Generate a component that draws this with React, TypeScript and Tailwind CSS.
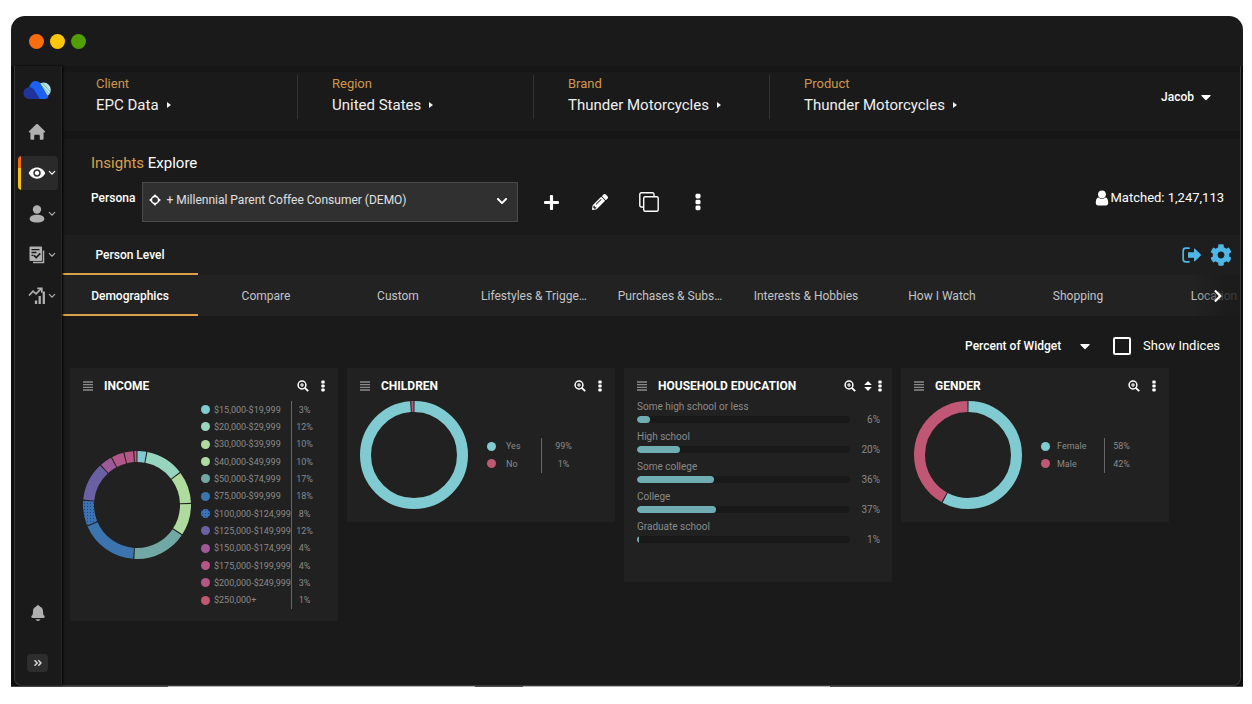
import type { ReactNode } from "react";
import { FaAngleDoubleRight, FaCaretDown, FaChevronDown, FaChevronRight, FaCog, FaPencilAlt, FaPlus } from "react-icons/fa";
import { IoNotifications } from "react-icons/io5";
import { MdVisibility } from "react-icons/md";

type Slice = { label: string; value: number; color: string };

const filters = [
  { label: "Client", value: "EPC Data" },
  { label: "Region", value: "United States" },
  { label: "Brand", value: "Thunder Motorcycles" },
  { label: "Product", value: "Thunder Motorcycles" },
];

const tabs = [
  { name: "Demographics", width: "w-[136px]" },
  { name: "Compare", width: "w-[136px]" },
  { name: "Custom", width: "w-[128px]" },
  { name: "Lifestyles & Trigge…", width: "w-[144px]" },
  { name: "Purchases & Subs…", width: "w-[128px]" },
  { name: "Interests & Hobbies", width: "w-[144px]" },
  { name: "How I Watch", width: "w-[128px]" },
  { name: "Shopping", width: "w-[144px]" },
  { name: "Location", width: "w-[128px]" },
];

const income: Slice[] = [
  { label: "$15,000-$19,999", value: 3, color: "#80cbd1" },
  { label: "$20,000-$29,999", value: 12, color: "#98d5bf" },
  { label: "$30,000-$39,999", value: 10, color: "#afdb9e" },
  { label: "$40,000-$49,999", value: 10, color: "#afdb9e" },
  { label: "$50,000-$74,999", value: 17, color: "#72a8a4" },
  { label: "$75,000-$99,999", value: 18, color: "#3b74ae" },
  { label: "$100,000-$124,999", value: 8, color: "url(#stipple)" },
  { label: "$125,000-$149,999", value: 12, color: "#6a61a5" },
  { label: "$150,000-$174,999", value: 4, color: "#9d5a99" },
  { label: "$175,000-$199,999", value: 4, color: "#b45687" },
  { label: "$200,000-$249,999", value: 3, color: "#b45686" },
  { label: "$250,000+", value: 1, color: "#c05775" },
];

const children: Slice[] = [
  { label: "Yes", value: 99, color: "#80cbd1" },
  { label: "No", value: 1, color: "#c05775" },
];

const gender: Slice[] = [
  { label: "Female", value: 58, color: "#80cbd1" },
  { label: "Male", value: 42, color: "#c05775" },
];

const education = [
  { label: "Some high school or less", value: 6 },
  { label: "High school", value: 20 },
  { label: "Some college", value: 36 },
  { label: "College", value: 37 },
  { label: "Graduate school", value: 1 },
];

/* Icons */

function Kebab({ className }: { className: string }) {
  return (
    <svg viewBox="0 0 6 18" fill="currentColor" className={className} aria-hidden="true">
      <rect x="0.5" y="0.8" width="5" height="4.6" rx="1.4" />
      <rect x="0.5" y="6.7" width="5" height="4.6" rx="1.4" />
      <rect x="0.5" y="12.6" width="5" height="4.6" rx="1.4" />
    </svg>
  );
}

function CloudLogo() {
  return (
    <svg viewBox="0 0 28 20" className="mr-0.5 h-5 w-7" aria-hidden="true">
      <circle cx="20.6" cy="9.8" r="7.2" fill="#b9e3e6" />
      <path d="M17 4l9 10M19.500 3l8 9M15 6l10 11" stroke="#5fb3b8" strokeWidth="0.8" />
      <path d="M6 8.200C7 3.500 9.500.8 13 1c3 .2 4.500 2 5.400 4.300L25.500 17c-.8 1.300-1.900 1.900-3.300 1.900H14z" fill="#1c62f2" />
      <path d="M6.500 19C3 19 .5 16.500.5 13.200c0-3.500 2.500-5.900 5.800-5.900 2.300 0 3.900.9 5 2.700l5.600 9z" fill="#22329b" />
    </svg>
  );
}

function HomeIcon() {
  return (
    <svg viewBox="0 0 18 18" fill="currentColor" className="size-[18px]" aria-hidden="true">
      <path d="M8.200 1.300c.5-.4 1.100-.4 1.600 0l7.200 6.900c.5.500.2 1.200-.5 1.200h-.9v6c0 .9-.5 1.400-1.300 1.400h-2.500v-3.900c0-.8-.4-1.200-1.200-1.200H7.400c-.8 0-1.200.4-1.200 1.200v3.900H3.700c-.8 0-1.300-.5-1.300-1.400v-6h-.9c-.7 0-1-.7-.5-1.200z" />
    </svg>
  );
}

function PersonIcon() {
  return (
    <svg viewBox="0 0 16 18" fill="currentColor" className="h-[18px] w-4" aria-hidden="true">
      <circle cx="8" cy="4.500" r="4.200" />
      <path d="M.7 13.800C.7 11.300 3.500 9.700 8 9.700s7.300 1.600 7.300 4.100S12.500 17.500 8 17.500.7 16.300.7 13.800z" />
    </svg>
  );
}

function UserIcon() {
  return (
    <svg viewBox="0 0 14 16" fill="currentColor" className="h-4 w-3.5" aria-hidden="true">
      <circle cx="7" cy="4.300" r="3.900" />
      <path d="M3.500 7.400C1.500 7.700.8 10 .8 12.700c0 1.700.9 2.700 2.300 2.700h7.800c1.400 0 2.300-1 2.300-2.700 0-2.700-.7-5-2.700-5.300-1 .9-2.100 1.400-3.500 1.400s-2.500-.5-3.500-1.400z" />
    </svg>
  );
}

function SurveyIcon() {
  return (
    <svg viewBox="0 0 16 18" className="h-[18px] w-4" aria-hidden="true">
      <path d="M14.500 4.500v12H4" fill="none" stroke="currentColor" strokeWidth="1.500" />
      <rect x="0.5" y="0.5" width="12.500" height="14.500" rx="1" fill="currentColor" />
      <path d="M2.500 3.700h8M2.500 6.500h5M2.500 9.300h2" stroke="#1a1a1a" strokeWidth="1.300" />
      <path d="M5 9.300l2.300 2.300 4-4.300" fill="none" stroke="#1a1a1a" strokeWidth="1.700" />
    </svg>
  );
}

function TrendIcon() {
  return (
    <svg viewBox="0 0 18 18" className="size-[18px]" fill="none" stroke="currentColor" aria-hidden="true">
      <path d="M1 8.500L5 4.200l3 2.600 5-5" strokeWidth="1.700" />
      <path d="M9.300 1.300h4.500v4.500" strokeWidth="1.700" />
      <path d="M8 17v-3.500M11.700 17V9M15.800 17V4.500" strokeWidth="2.300" />
    </svg>
  );
}

function MiniChevron() {
  return (
    <svg viewBox="0 0 8 6" className="h-1.5 w-2" fill="none" stroke="currentColor" strokeWidth="1.200" aria-hidden="true">
      <path d="M1 1.200l3 3 3-3" />
    </svg>
  );
}

function CopyIcon() {
  return (
    <svg viewBox="0 0 20 20" className="size-5" fill="none" stroke="currentColor" strokeWidth="1.400" aria-hidden="true">
      <rect x="4.700" y="4.700" width="14.500" height="14.500" rx="1.500" />
      <path d="M4.500 15H2.300A1.500 1.500 0 0 1 .8 13.500V2.300A1.500 1.500 0 0 1 2.300.8h11.200A1.500 1.500 0 0 1 15 2.300v2.200" />
    </svg>
  );
}

function TargetIcon() {
  return (
    <svg viewBox="0 0 12 12" className="size-3" fill="none" stroke="currentColor" aria-hidden="true">
      <circle cx="6" cy="6" r="3.700" strokeWidth="1.400" />
      <path d="M6 0l2.400 3.400H3.600zM6 12l2.400-3.400H3.600zM0 6l3.400-2.400v4.800zM12 6L8.600 3.600v4.800z" fill="currentColor" stroke="none" />
      <circle cx="6" cy="6" r="2.500" fill="#303030" stroke="none" />
    </svg>
  );
}

function ExportIcon() {
  return (
    <svg viewBox="0 0 20 16" className="h-4 w-5" aria-hidden="true">
      <path d="M7 1.200H3.700C2.200 1.200 1.200 2.200 1.200 3.700v8.600c0 1.500 1 2.500 2.500 2.500H7" fill="none" stroke="currentColor" strokeWidth="1.700" strokeLinecap="round" />
      <path d="M6 5.200h6V2.300c0-.7.700-.9 1.200-.4l5.400 5.400c.4.400.4 1 0 1.400l-5.400 5.400c-.5.500-1.200.3-1.200-.4v-2.900H6z" fill="currentColor" />
    </svg>
  );
}

function ZoomIcon() {
  return (
    <svg viewBox="0 0 12 12" className="size-3" fill="none" stroke="currentColor" aria-hidden="true">
      <circle cx="5" cy="5" r="3.900" strokeWidth="1.500" />
      <path d="M5 3v4M3 5h4" strokeWidth="1.100" />
      <path d="M7.800 7.800l3.400 3.400" strokeWidth="1.900" />
    </svg>
  );
}

function SortIcon() {
  return (
    <svg viewBox="0 0 8 10" className="h-2.5 w-2" fill="currentColor" aria-hidden="true">
      <path d="M4 0l3.800 4H.2zM4 10L.2 6h7.600z" />
    </svg>
  );
}

function DragIcon() {
  return (
    <svg viewBox="0 0 10 10" className="size-2.5 text-[#8a8a8a]" stroke="currentColor" strokeWidth="1.300" aria-hidden="true">
      <path d="M0 1h10M0 3.700h10M0 6.300h10M0 9h10" />
    </svg>
  );
}

/* Charts */

function Donut({ data }: { data: Slice[] }) {
  const total = data.reduce((sum, d) => sum + d.value, 0);
  let start = 0;
  return (
    <svg viewBox="0 0 108 108" className="size-[108px] shrink-0" role="img" aria-label="Share by group">
      <defs>
        <pattern id="stipple" width="3" height="3" patternUnits="userSpaceOnUse">
          <rect width="3" height="3" fill="#3b74ae" />
          <rect x="1" y="1" width="1" height="1" fill="#1c3fae" />
        </pattern>
      </defs>
      <g transform="rotate(-90 54 54)" fill="none" strokeWidth="11">
        {data.map((d) => {
          const size = (d.value / total) * 100;
          const offset = start;
          start += size;
          return (
            <circle
              key={d.label}
              cx="54"
              cy="54"
              r="48.500"
              pathLength={100}
              stroke={d.color}
              strokeDasharray={`${size - 0.35} 100`}
              strokeDashoffset={-offset - 0.17}
            />
          );
        })}
      </g>
    </svg>
  );
}

function Legend({ data, className, labelClass, valueClass }: { data: Slice[]; className: string; labelClass: string; valueClass: string }) {
  return (
    <div className={`flex text-[9px] leading-3 text-[#8a8a8a] ${className}`}>
      <ul className={`grid items-center ${labelClass}`}>
        {data.map((d) => (
          <li key={d.label} className="flex items-center gap-[inherit] whitespace-nowrap">
            <svg viewBox="0 0 9 9" className="size-[9px] shrink-0" aria-hidden="true">
              <circle cx="4.500" cy="4.500" r="4.500" fill={d.color} />
            </svg>
            {d.label}
          </li>
        ))}
      </ul>
      <ul className={`grid items-center border-l border-[#666] text-center ${valueClass}`}>
        {data.map((d) => (
          <li key={d.label}>{d.value}%</li>
        ))}
      </ul>
    </div>
  );
}

function Widget({ title, sortable, className, children: body }: { title: string; sortable?: boolean; className: string; children: ReactNode }) {
  return (
    <section className={`w-[268px] bg-[#212121] pl-[13px] ${className}`}>
      <header className={`flex h-[33px] items-center pt-[3px] ${sortable ? "pr-2.5" : "pr-[13px]"}`}>
        <DragIcon />
        <h2 className="ml-[11px] flex-1 text-xs font-bold text-white">{title}</h2>
        <button type="button" aria-label="Zoom in" className="text-white">
          <ZoomIcon />
        </button>
        {sortable && (
          <button type="button" aria-label="Sort" className="ml-2 text-white">
            <SortIcon />
          </button>
        )}
        <button type="button" aria-label={`${title} options`} className={sortable ? "ml-1.5 text-white" : "ml-3 text-white"}>
          <Kebab className="h-3 w-1" />
        </button>
      </header>
      {body}
    </section>
  );
}

function NavItem({ label, active, menu, children: icon }: { label: string; active?: boolean; menu?: boolean; children: ReactNode }) {
  return (
    <button
      type="button"
      aria-label={label}
      className={`relative flex h-[34px] w-10 items-center gap-0.5 overflow-hidden rounded pl-2.5 ${active ? "bg-[#2a2a2a] text-white" : "text-[#b0b0b0]"}`}
    >
      {active && <span className="absolute inset-y-0 left-0 w-[3px] bg-linear-to-b from-[#f96a0c] from-35% to-[#ffc107] to-35%" />}
      <span className="flex w-[18px] shrink-0 justify-center">{icon}</span>
      {menu && <MiniChevron />}
    </button>
  );
}

function Sidebar() {
  return (
    <aside className="z-10 flex w-[47px] shrink-0 flex-col items-center border-r border-[#272727] pt-3.5 pr-px pb-[13px] shadow-[1px_0_2px_#000]">
      <CloudLogo />
      <nav className="mt-[15px] flex flex-col gap-[7px]">
        <NavItem label="Home">
          <HomeIcon />
        </NavItem>
        <NavItem label="Insights" active menu>
          <MdVisibility className="size-[18px]" />
        </NavItem>
        <NavItem label="People" menu>
          <PersonIcon />
        </NavItem>
        <NavItem label="Surveys" menu>
          <SurveyIcon />
        </NavItem>
        <NavItem label="Trends" menu>
          <TrendIcon />
        </NavItem>
      </nav>
      <button type="button" aria-label="Notifications" className="mt-auto text-[#b0b0b0]">
        <IoNotifications className="size-[18px]" />
      </button>
      <button type="button" aria-label="Expand menu" className="mt-8 flex h-[18px] w-[21px] items-center justify-center rounded-sm bg-[#2d2d2d] text-[#d0d0d0]">
        <FaAngleDoubleRight className="size-2.5" />
      </button>
    </aside>
  );
}

export default function App() {
  return (
    <div className="flex min-h-screen flex-col bg-white pt-4 pr-[9px] pb-[17px] pl-[11px] font-['Roboto',sans-serif] text-[#e6e6e6]">
      <div className="flex grow flex-col overflow-hidden rounded-t-[14px] bg-[#1a1a1a]">
        {/* Window bar */}
        <div className="flex h-[50px] items-center gap-1.5 pl-[18px]">
          <span className="size-[15px] rounded-full bg-[#fb6d0c]" />
          <span className="size-[15px] rounded-full bg-[#ffc605]" />
          <span className="size-[15px] rounded-full bg-[#529f02]" />
        </div>

        <div className="flex grow bg-[#0e0e0e] pr-0.5 pl-[3px]">
          <div className="flex min-w-0 grow rounded-b-lg border-x border-b border-[#3a3a3a] bg-[#1a1a1a]">
            <Sidebar />

            <main className="min-w-0 flex-1">
              <header className="flex items-center border-t-6 border-b-8 border-[#161616] pt-[3px] pb-3">
                {filters.map((f) => (
                  <div key={f.label} className="h-11 w-[236px] border-r border-[#333] pl-[34px] last-of-type:border-0">
                    <div className="text-[13px] leading-[18px] text-[#cf9848]">{f.label}</div>
                    <button type="button" className="flex items-center gap-2 text-[15px] leading-6 whitespace-nowrap text-[#f0f0f0]">
                      {f.value}
                      <svg viewBox="0 0 4 6" className="h-1.5 w-1" fill="currentColor" aria-hidden="true">
                        <path d="M0 0l4 3-4 3z" />
                      </svg>
                    </button>
                  </div>
                ))}
                <button type="button" className="mr-[26px] ml-auto flex items-center gap-1 text-xs font-medium text-white">
                  Jacob
                  <FaCaretDown className="size-4" />
                </button>
              </header>

              <section className="pt-3 pr-4 pb-[13px] pl-[29px]">
                <h1 className="text-[15px] leading-6 text-white">
                  <span className="text-[#dba14a]">Insights</span> Explore
                </h1>
                <div className="mt-[7px] flex">
                  <label htmlFor="persona" className="text-xs leading-8 font-medium text-white">
                    Persona
                  </label>
                  <div className="relative ml-[7px] w-[376px]">
                    <select
                      id="persona"
                      className="h-10 w-full appearance-none border border-[#4a4a4a] bg-[#303030] pb-1 pl-[23px] text-xs text-[#e0e0e0]"
                    >
                      <option>+ Millennial Parent Coffee Consumer (DEMO)</option>
                    </select>
                    <span className="pointer-events-none absolute top-3 left-[7px] text-white">
                      <TargetIcon />
                    </span>
                    <FaChevronDown className="pointer-events-none absolute top-[13px] right-2.5 size-3 text-white" />
                  </div>
                  <div className="ml-[19px] flex items-center gap-[21px] text-white">
                    <button type="button" aria-label="Add" className="flex size-7 items-center justify-center">
                      <FaPlus className="size-[17px]" />
                    </button>
                    <button type="button" aria-label="Edit" className="flex size-7 items-center justify-center">
                      <FaPencilAlt className="size-4" />
                    </button>
                    <button type="button" aria-label="Copy" className="flex size-7 items-center justify-center">
                      <CopyIcon />
                    </button>
                    <button type="button" aria-label="More" className="flex size-7 items-center justify-center">
                      <Kebab className="h-[18px] w-1.5" />
                    </button>
                  </div>
                  <div className="ml-auto flex h-8 items-center gap-0.5 text-[13px] text-white">
                    <UserIcon />
                    Matched: 1,247,113
                  </div>
                </div>
              </section>

              <div className="flex h-10 items-center justify-between bg-[#1e1e1e] pr-2">
                <button type="button" className="h-full w-[136px] border-b-2 border-[#dba14a] pt-0.5 text-xs font-medium text-white">
                  Person Level
                </button>
                <div className="flex items-center gap-2 text-[#4db8e8]">
                  <button type="button" aria-label="Export">
                    <ExportIcon />
                  </button>
                  <button type="button" aria-label="Settings">
                    <FaCog className="size-[22px]" />
                  </button>
                </div>
              </div>

              <nav className="relative flex h-[41px] overflow-hidden bg-[#222]">
                {tabs.map((t, i) => (
                  <button
                    key={t.name}
                    type="button"
                    className={`shrink-0 border-b-2 pt-0.5 text-xs ${t.width} ${i === 0 ? "border-[#dba14a] font-medium text-white" : "border-transparent text-[#c4c4c4]"}`}
                  >
                    {t.name}
                  </button>
                ))}
                <button
                  type="button"
                  aria-label="Next tabs"
                  className="absolute inset-y-0 right-0 flex w-12 items-center justify-end bg-linear-to-r from-transparent to-[#1a1a1a]/80 to-70% pr-[15px] text-white"
                >
                  <FaChevronRight className="size-3.5" />
                </button>
              </nav>

              <div className="flex items-center justify-end pt-[21px] pr-5 pb-[13px] text-white">
                <div className="relative w-[126px]">
                  <select aria-label="Metric" className="block h-[18px] w-full appearance-none text-xs font-medium">
                    <option>Percent of Widget</option>
                  </select>
                  <FaCaretDown className="pointer-events-none absolute top-px -right-0.5 size-4" />
                </div>
                <input id="indices" type="checkbox" className="ml-[22px] size-[18px] appearance-none rounded-xs border-2 border-white checked:bg-white" />
                <label htmlFor="indices" className="pl-3 text-[13px] leading-[18px]">
                  Show Indices
                </label>
              </div>

              <div className="flex flex-wrap items-start gap-[9px] pb-4 pl-2">
                <Widget title="INCOME" className="pb-3">
                  <div className="flex items-center">
                    <Donut data={income} />
                    <Legend data={income} className="ml-[10px] h-52" labelClass="w-[90px] gap-x-1" valueClass="w-[26px]" />
                  </div>
                </Widget>

                <Widget title="CHILDREN" className="pb-[13px]">
                  <div className="flex items-center">
                    <Donut data={children} />
                    <Legend data={children} className="ml-[19px] h-[35px]" labelClass="w-[54px] gap-x-2.5" valueClass="w-11" />
                  </div>
                </Widget>

                <Widget title="HOUSEHOLD EDUCATION" sortable className="pb-[31px]">
                  <ul className="pr-3 text-[10px] leading-3 text-[#8a8a8a]">
                    {education.map((e) => (
                      <li key={e.label} className="h-[30px]">
                        <div>{e.label}</div>
                        <div className="flex h-[13px] items-center">
                          <div className="h-[7px] flex-1 overflow-hidden rounded-full bg-[#191919]">
                            <div className="h-full rounded-full bg-[#70adb3]" style={{ width: `${e.value}%` }} />
                          </div>
                          <span className="w-[30px] text-right">{e.value}%</span>
                        </div>
                      </li>
                    ))}
                  </ul>
                </Widget>

                <Widget title="GENDER" className="pb-[13px]">
                  <div className="flex items-center">
                    <Donut data={gender} />
                    <Legend data={gender} className="ml-[19px] h-[35px]" labelClass="w-[63px] gap-x-[7px]" valueClass="w-[34px]" />
                  </div>
                </Widget>
              </div>
            </main>
          </div>
        </div>
        {/* Edge of the windows behind */}
        <div className="flex h-px bg-[#4a4a4a] pl-[157px]">
          <span className="w-[307px] bg-[#b0b0b0]" />
          <span className="ml-12 w-[307px] bg-[#b0b0b0]" />
        </div>
      </div>
    </div>
  );
}
